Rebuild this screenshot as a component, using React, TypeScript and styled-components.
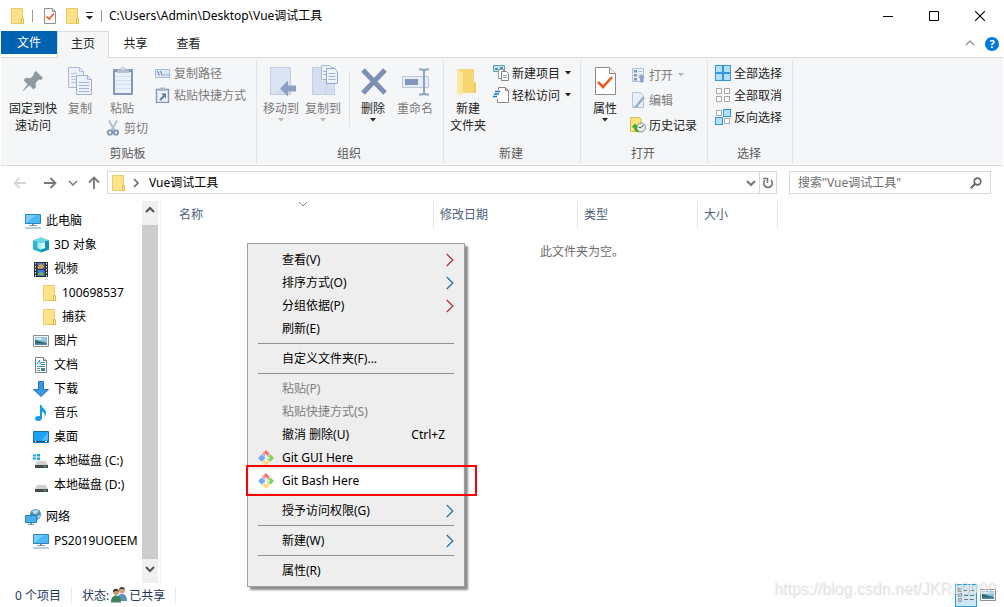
import React from "react";
import styled, { createGlobalStyle, css } from "styled-components";

const GlobalStyle = createGlobalStyle`
  * { box-sizing: border-box; }
  body { margin: 0; background: #fff; }
  body, button, input, table {
    font-family: "Noto Sans", "Noto Sans CJK SC", sans-serif;
    font-size: 12px;
    line-height: 17px;
    color: #000;
  }
  button { background: none; border: 0; padding: 0; margin: 0; }
  svg { display: block; flex: none; }
`;

/* ---------- icons ---------- */

const Folder = () => (
  <svg width="16" height="16" viewBox="0 0 16 16">
    <path d="M2.500.5h11v9.500l1 1v4.500h-12z" fill="#ffe289" stroke="#eccb66" />
    <path d="M12.500 15.500v-5l2 .5v4.500z" fill="#ffe9a4" stroke="#e0b94a" />
  </svg>
);

const CheckPage = ({ size = 16 }: { size?: number }) =>
  size === 32 ? (
    <svg width="32" height="32" viewBox="0 0 32 32">
      <path d="M6.500 2.500h14l6 6v21h-20v-27z" fill="#fff" stroke="#8b8b8b" />
      <path d="M20.500 2.500v6h6" fill="#eee" stroke="#8b8b8b" />
      <path d="M9 17l5 5 9-10" fill="none" stroke="#f0581f" strokeWidth="2.600" />
    </svg>
  ) : (
    <svg width="16" height="16" viewBox="0 0 16 16">
      <path d="M2.500.5h8l3 3v12h-11z" fill="#fafafa" stroke="#909090" />
      <path d="M10.500.5v3h3" fill="#ddd" stroke="#909090" />
      <path d="M4.500 8.500l2.500 2.500 5-5.500" fill="none" stroke="#f0581f" strokeWidth="1.600" />
    </svg>
  );

const CustomizeArrow = () => (
  <svg width="8" height="8" viewBox="0 0 8 8">
    <path d="M0 0h7v1H0zM0 4h7L3.500 7.500z" fill="#222" />
  </svg>
);

const DropArrow = ({ color = "#222" }: { color?: string }) => (
  <svg width="6" height="4" viewBox="0 0 6 4">
    <path d="M0 0h6L3 3.500z" fill={color} />
  </svg>
);

type ChevronProps = { dir: "up" | "down" | "right"; color?: string; width?: number; size?: number };
const chevronPaths = { up: "M2 7l4-4 4 4", down: "M2 4l4 4 4-4", right: "M4 2l4 4-4 4" };
const Chevron = ({ dir, color = "#555", width = 1.5, size = 12 }: ChevronProps) => (
  <svg width={size} height={size} viewBox="0 0 12 12">
    <path d={chevronPaths[dir]} fill="none" stroke={color} strokeWidth={width} />
  </svg>
);

const SubmenuArrow = ({ color }: { color: string }) => (
  <svg width="8" height="14" viewBox="0 0 8 14">
    <path d="M.8 1l6 6-6 6" fill="none" stroke={color} strokeWidth="1.200" />
  </svg>
);

const Arrow = ({ dir, color }: { dir: "left" | "right" | "up"; color: string }) => {
  const turn = { right: 0, left: 180, up: 270 }[dir];
  return (
    <svg width="14" height="14" viewBox="0 0 14 14">
      <g transform={`rotate(${turn} 7 7)`} fill="none" stroke={color} strokeWidth="1.800">
        <path d="M1 7h11M7.500 2l5 5-5 5" />
      </g>
    </svg>
  );
};

const Refresh = () => (
  <svg width="12" height="12" viewBox="0 0 12 12">
    <path d="M3 3A4.300 4.300 0 1 0 9 3" fill="none" stroke="#777" strokeWidth="1.700" />
    <path d="M1 1.500h4.500V6" fill="none" stroke="#777" strokeWidth="1.600" />
  </svg>
);

const Magnifier = () => (
  <svg width="12" height="12" viewBox="0 0 12 12">
    <circle cx="7.500" cy="4.500" r="3.300" fill="none" stroke="#666" strokeWidth="1.700" />
    <path d="M5 7L.8 11.200" stroke="#666" strokeWidth="2" />
  </svg>
);

const Pin = () => (
  <svg width="32" height="32" viewBox="0 0 32 32">
    <path
      d="M19 6l7 7-2 2-2-.5-3.500 3.500.5 4-2.500 2.500-4.200-4.200L6.500 26 6 25.500l4.500-6.300-4-4L9 12.700l4.500.6L17 9.800 16.800 8z"
      fill="#8e9aa0"
    />
  </svg>
);

const CopyPages = () => (
  <svg width="32" height="32" viewBox="0 0 32 32">
    <path d="M4.500 2.500h11l4 4v16h-15z" fill="#edf2fa" stroke="#a9bad6" />
    <path d="M15.500 2.500v4h4M7 8.500h6M7 11.500h6M7 14.500h6M7 17.500h6" fill="none" stroke="#b4c6e2" />
    <path d="M12.500 10.500h11l4 4v15h-15z" fill="#edf2fa" stroke="#a0b2d0" />
    <path d="M23.500 10.500v4h4M15 17.500h10M15 20.500h10M15 23.500h10M15 26.500h10" fill="none" stroke="#a0b5d8" />
  </svg>
);

const Clipboard = () => (
  <svg width="32" height="32" viewBox="0 0 32 32">
    <rect x="7" y="4" width="20" height="26" rx="1" fill="#8297bb" />
    <rect x="9" y="7" width="16" height="21" fill="#e8f0fa" />
    <path d="M9 11.500h16M9 15.500h16M9 19.500h16M9 23.500h16" stroke="#d6e2f2" />
    <path d="M11 8V4.500h3.500a2.500 2.500 0 0 1 5 0H23V8z" fill="#b4c0d2" />
    <circle cx="17" cy="4" r="1" fill="#eef3fa" />
  </svg>
);

const Scissors = () => (
  <svg width="16" height="16" viewBox="0 0 16 16">
    <path d="M4 .5l5.500 10M12 .5l-5.500 10" stroke="#b0bfd5" strokeWidth="2" />
    <circle cx="5" cy="12.500" r="2.200" fill="none" stroke="#7d93b8" strokeWidth="1.800" />
    <circle cx="11" cy="12.500" r="2.200" fill="none" stroke="#7d93b8" strokeWidth="1.800" />
  </svg>
);

const PathIcon = () => (
  <svg width="16" height="16" viewBox="0 0 16 16">
    <path d="M.5 4.500h14v8H.5z" fill="#dde8f5" stroke="#a9bdd9" />
    <path d="M2.500 6l1.800 4.500M5.500 6l1.800 4.500M8.500 10h1M10.500 10h1M12.500 10h1" stroke="#60799f" />
  </svg>
);

const ShortcutClip = () => (
  <svg width="16" height="16" viewBox="0 0 16 16">
    <path d="M1.500 2.500h12v13h-12z" fill="#edf3fb" stroke="#8297bb" strokeWidth="1.400" />
    <path d="M4 4V1.500h1.500V.5h4v1H11V4z" fill="#a9b8d0" />
    <path d="M5 13l4-4" stroke="#60799f" strokeWidth="2" />
    <path d="M6 6.500h5v5z" fill="#60799f" />
  </svg>
);

const MoveTo = () => (
  <svg width="32" height="32" viewBox="0 0 32 32">
    <path d="M5.500 2.500h20v27h-20z" fill="#cfdaec" stroke="#c2d0e6" />
    <path d="M6 3h19v15L10 29H6z" fill="#dbe4f2" />
    <path d="M15 23.500l8-8v5h8v6h-8v5z" fill="#8ba0c3" />
  </svg>
);

const CopyTo = () => (
  <svg width="32" height="32" viewBox="0 0 32 32">
    <path d="M5.500 2.500h22v27h-22z" fill="#d5dfef" stroke="#c2d0e6" />
    <path d="M14.500.5h8l3 3v11h-11z" fill="#eef3fa" stroke="#a5b7d4" />
    <path d="M19.500 3.500h8l3 3v12h-11z" fill="#eef3fa" stroke="#94a8ca" />
    <path d="M21.500 8.500h7M21.500 11.500h7M21.500 14.500h7M16 6.500h3M16 9.500h3" stroke="#9cb2d6" />
    <path d="M19 19v11" stroke="#c2d0e6" />
  </svg>
);

const DeleteCross = () => (
  <svg width="32" height="32" viewBox="0 0 32 32">
    <path d="M6 5l22 23M28 5L6 28" stroke="#7d90b3" strokeWidth="5" />
  </svg>
);

const Rename = () => (
  <svg width="32" height="32" viewBox="0 0 32 32">
    <path d="M3.500 11.500h26v11h-26z" fill="#e6edf8" stroke="#b9c9e0" />
    <path d="M6 14h13v6H6z" fill="#8297bb" />
    <path d="M20 4.500h3.500L25 6l1.500-1.500H30M25 6v22M20 29.500h3.500L25 28l1.500 1.500H30" fill="none" stroke="#8ba0c3" strokeWidth="2" />
  </svg>
);

const NewFolder = () => (
  <svg width="32" height="32" viewBox="0 0 32 32">
    <path d="M5 4h17v14l2 1v9H9z" fill="#f7d673" />
    <path d="M5 4l6 4v19l-2 4-4-3z" fill="#ffe79b" />
    <path d="M22 17l2 1v10h-3z" fill="#f2c95a" />
  </svg>
);

const NewItem = () => (
  <svg width="16" height="16" viewBox="0 0 16 16">
    <path d="M.5.5h11v6H.5z" fill="#c5e4ef" stroke="#5b9fb3" />
    <path d="M2 3h3v2H2zM7 2h3v3H7z" fill="#4d9bb2" />
    <path d="M5.500 4.500h5v9h-5z" fill="#fff" stroke="#999" />
    <path d="M8.500 6.500h5l2 2v7h-7z" fill="#fff" stroke="#888" />
    <path d="M10 10.500h4M10 12.500h4" stroke="#7ba7c4" />
  </svg>
);

const EasyAccess = () => (
  <svg width="16" height="16" viewBox="0 0 16 16">
    <path d="M5.500 3V.5h7l3 3v12h-11V12" fill="#fff" stroke="#888" />
    <path d="M12.500.5v3h3" fill="none" stroke="#888" />
    <path d="M2 4.500h5M1 7h5M0 9.500h4" stroke="#1979ca" strokeWidth="1.500" />
  </svg>
);

const OpenIcon = () => (
  <svg width="16" height="16" viewBox="0 0 16 16">
    <path d="M2.500 1.500h11v13h-11z" fill="#e8eff9" stroke="#aebfd8" />
    <path d="M4 3h3v2.500H4zM4 7h3v2.500H4zM4 11h3v2.500H4z" fill="#8297bb" />
    <path d="M8.500 4.500h3.500M8.500 8h2" stroke="#a9bad6" />
    <path d="M8 11l3.500-4 3.500 4h-2v4.500h-3V11z" fill="#91a4c5" />
  </svg>
);

const EditIcon = () => (
  <svg width="16" height="16" viewBox="0 0 16 16">
    <path d="M2.500.5h8l3 3v12h-11z" fill="#e8eff9" stroke="#b4c4dc" />
    <path d="M6 13l7-9 2 2-7 8-3 1z" fill="#9eafcc" />
    <path d="M4 15l4-1" stroke="#8297bb" />
  </svg>
);

const HistoryIcon = () => (
  <svg width="16" height="16" viewBox="0 0 16 16">
    <path d="M.5.500h9l1.500 2v12H.5z" fill="#fbe37e" stroke="#dcbf4b" />
    <circle cx="11" cy="10.500" r="4.500" fill="#e4e9e6" stroke="#8b9591" />
    <path d="M11 10.500l2.500-2.500M11 10.500h-2" fill="none" stroke="#555" />
    <path d="M1.500 10.500l3.500-4 3.500 4H6.500c.3 2 1.500 3.500 3.500 4.500-4 .8-6-1.500-6-4.500z" fill="#35a936" />
  </svg>
);

const cells = [
  [0, 0],
  [8, 0],
  [0, 8],
  [8, 8],
];
const SelectIcon = ({ on }: { on: number[] }) => (
  <svg width="16" height="16" viewBox="0 0 16 16">
    {cells.map(([x, y], i) =>
      on.includes(i) ? (
        <rect key={i} x={x + 0.5} y={y + 0.5} width="7" height="7" fill="#b3dfff" stroke="#3295dd" />
      ) : (
        <rect key={i} x={x + 1.5} y={y + 1.5} width="5" height="5" fill="#fff" stroke="#aaa" />
      ),
    )}
  </svg>
);

const Monitor = () => (
  <svg width="16" height="16" viewBox="0 0 16 16">
    <path d="M.5 1.500h15v9H.5z" fill="#4cb8f5" stroke="#2b86b9" />
    <path d="M1 10L11 2H1z" fill="#79cdfb" />
    <path d="M7 11h2v1.500H7zM4 12h8v1H4zM0 14.500h16v1H0z" fill="#7d9bb0" />
  </svg>
);

const Cube = () => (
  <svg width="16" height="16" viewBox="0 0 16 16">
    <path d="M0 3.500L8 .5l8 3v9L8 15.500l-8-3z" fill="#2bb5cf" />
    <path d="M0 3.500L8 .5l8 3-8 2z" fill="#6fd9e8" />
    <path d="M12 4.500l4-1v9l-8 3v-3l4-1z" fill="#1391b8" />
    <path d="M4.500 5l3.500 1v6.500l-3.500-1.500z" fill="#a5ecf3" />
    <path d="M8 6l4-1v6l-4 1.500z" fill="#d9f8fa" />
  </svg>
);

const Film = () => (
  <svg width="16" height="16" viewBox="0 0 16 16">
    <path d="M1 1h14v15H1z" fill="#303030" />
    <path d="M4.500 2h7v6h-7z" fill="#5878c8" />
    <path d="M4.500 9h7v6h-7z" fill="#3d7cd6" />
    <path d="M5 5l3-2 3 2-2 2.500H5z" fill="#d8a13c" />
    <path d="M5 13l3-2 3 2v1H5z" fill="#76b547" />
    <path d="M2.500 2v14M13.500 2v14" stroke="#eee" strokeDasharray="1.500 1.500" />
  </svg>
);

const Picture = () => (
  <svg width="16" height="16" viewBox="0 0 16 16">
    <path d="M.5 2.500h15v11H.5z" fill="#fff" stroke="#8d8d8d" />
    <path d="M2 4h12v8H2z" fill="#8ec5ee" />
    <path d="M2 7l4 1 8 2v2H2z" fill="#2f6b63" />
    <path d="M2 10.500h12V12H2z" fill="#4b87b8" />
    <path d="M3 5h5l2 1.500H4z" fill="#edf7fd" />
  </svg>
);

const Document = () => (
  <svg width="16" height="16" viewBox="0 0 16 16">
    <path d="M2.500.5h8l3 3v12h-11z" fill="#fff" stroke="#7d7d7d" />
    <path d="M10.500.5v3h3" fill="#ddd" stroke="#7d7d7d" />
    <path d="M4 7l2.500-4 .8 4M8 5.500h4M4 9.500h8M8 7.500h4" fill="none" stroke="#2e8fd0" />
    <path d="M4 11.500h3M4 13.500h3" stroke="#888" />
    <path d="M8 11h4v3H8z" fill="#45829b" />
  </svg>
);

const Download = () => (
  <svg width="16" height="16" viewBox="0 0 16 16">
    <path d="M5.500.5h5v8h5L8 15.500.5 8.500h5z" fill="#3a97e8" stroke="#2878bd" />
  </svg>
);

const Music = () => (
  <svg width="16" height="16" viewBox="0 0 16 16">
    <path d="M7 0h1.500c.5 3.500 4.500 4 4.500 7.500 0 1.500-.5 3-1.500 4 .5-3-.5-4-2.500-5V13c0 2-1.800 3-3.800 3S2 15 2 13.500s2-2.800 5-2.300z" fill="#139bea" />
  </svg>
);

const Desktop = () => (
  <svg width="16" height="16" viewBox="0 0 16 16">
    <path d="M.5 2.500h15v11H.5z" fill="#1ba1f8" stroke="#1670ae" />
    <path d="M15 3v8L8 12z" fill="#4db8fb" />
    <path d="M1 12h14v1H1z" fill="#0d4f86" />
    <path d="M2 12.500h1M12 12.500h2" stroke="#fff" />
  </svg>
);

const Drive = ({ system }: { system?: boolean }) => (
  <svg width="16" height="16" viewBox="0 0 16 16">
    <path d="M4 8h9l2 4H2z" fill="#cfd2d4" />
    <path d="M2 12h13v3H2z" fill="#4a4a4a" />
    <path d="M11 13h2v1h-2z" fill="#46e04d" />
    {system && <path d="M0 1.500h3v2H0zM4 1h3v2.500H4zM0 4.500h3v2H0zM4 4.500h3V7H4z" fill="#10a5ea" />}
  </svg>
);

const Network = () => (
  <svg width="16" height="16" viewBox="0 0 16 16">
    <circle cx="10.500" cy="5.500" r="5.500" fill="#5391b5" />
    <path d="M7 2c2-1.500 5-1 6.500 0L12 4.500 9 5zM12 7l3.500-1-2 4z" fill="#b8dcec" />
    <path d="M.5 6.500h11v7H.5z" fill="#45b0f2" stroke="#2b7fb4" />
    <path d="M5 14h2v1H5zM3 15h6v1H3z" fill="#7d9bb0" />
  </svg>
);

const People = () => (
  <svg width="16" height="16" viewBox="0 0 16 16">
    <circle cx="11" cy="3.500" r="3" fill="#d2a27c" />
    <path d="M8 3c0-4 6-4 6 0l-1-1H9z" fill="#4b3526" />
    <path d="M6 14c0-5 2-7 5-7s5 2 5 7z" fill="#5f8fb5" />
    <circle cx="5" cy="5" r="3" fill="#c99a78" />
    <path d="M2 5c0-4.500 6-4.500 6 0L6.500 3.500z" fill="#3d2b20" />
    <path d="M0 15.500C0 10.500 2 8.500 5 8.500s5 2 5 7z" fill="#3f8359" />
  </svg>
);

const GitLogo = () => (
  <svg width="16" height="16" viewBox="0 0 16 16">
    <g transform="rotate(45 8 8)">
      <rect x="2.300" y="2.300" width="5.400" height="5.400" rx=".8" fill="#f07878" />
      <rect x="8.300" y="2.300" width="5.400" height="5.400" rx=".8" fill="#84cf60" />
      <rect x="2.300" y="8.300" width="5.400" height="5.400" rx=".8" fill="#76a9fa" />
      <rect x="8.300" y="8.300" width="5.400" height="5.400" rx=".8" fill="#fbe07c" />
    </g>
    <path d="M6 3.500L8 5.500v5M8 6l2.500 2.200" fill="none" stroke="#fff" strokeWidth=".9" />
    <circle cx="8" cy="5.500" r=".9" fill="#fff" />
    <circle cx="8" cy="10.500" r=".9" fill="#fff" />
    <circle cx="10.800" cy="8.200" r=".9" fill="#fff" />
  </svg>
);

const DetailsView = () => (
  <svg width="16" height="16" viewBox="0 0 16 16">
    <path d="M.5 1.500h3v3h-3zM.5 6.500h3v3h-3zM.5 11.500h3v3h-3z" fill="#fff" stroke="#999" />
    <path d="M6 3.500h4M11.500 3.500H16M6 8.500h4M11.500 8.500H16M6 12.500h4M11.500 12.500H16" stroke="#777" />
    <path d="M1.500 2.500h1v1h-1z" fill="#444" />
    <path d="M1.500 7.500h1v1h-1z" fill="#2c77c9" />
    <path d="M1.500 12.500h1v1h-1z" fill="#d02a2a" />
  </svg>
);

/* ---------- window frame ---------- */

const Window = styled.div`
  position: relative;
  display: flex;
  flex-direction: column;
  min-height: 100vh;
  padding: 0 1px;
  background: #fff;
`;

const TitleBar = styled.header`
  display: flex;
  align-items: center;
  height: 31px;
  padding-left: 8px;
`;

const QuickButton = styled.button<{ $narrow?: boolean }>`
  display: flex;
  justify-content: center;
  align-items: center;
  width: ${(p) => (p.$narrow ? 8 : 16)}px;
  height: 22px;
`;

const TitleDivider = styled.span<{ $gap: number }>`
  width: 1px;
  height: 12px;
  margin: 0 ${(p) => p.$gap}px 0 7px;
  background: #999;
`;

const QuickGroup = styled.div`
  display: flex;
  gap: 6px;
`;

const Title = styled.h1`
  flex: 1;
  margin: 0;
  font-size: 12px;
  font-weight: 400;
`;

const WindowButton = styled.button`
  display: flex;
  align-items: center;
  justify-content: center;
  width: 46px;
  height: 31px;
`;

const TabBar = styled.nav`
  display: flex;
  height: 26px;
  padding-right: 4px;
`;

const Tab = styled.button<{ $kind?: "file" | "active" }>`
  position: relative;
  width: 53px;
  height: 24px;
  color: #222;
  ${(p) =>
    p.$kind === "file" &&
    css`
      width: 56px;
      height: 23px;
      background: #0063b1;
      color: #fff;
    `}
  ${(p) =>
    p.$kind === "active" &&
    css`
      width: 52px;
      height: 27px;
      padding-bottom: 3px;
      background: #f5f6f7;
      border: 1px solid #dadbdc;
      border-bottom: 0;
      z-index: 1;
    `}
`;

const TabTools = styled.div`
  display: flex;
  align-items: center;
  gap: 9px;
  margin-left: auto;
`;

const HelpButton = styled.button`
  width: 14px;
  height: 14px;
  border-radius: 50%;
  background: #0078d7;
  color: #fff;
  font-weight: 700;
  font-size: 11px;
  line-height: 14px;
`;

/* ---------- ribbon ---------- */

const Ribbon = styled.section`
  display: flex;
  height: 109px;
  padding: 2px 0;
  background: #f5f6f7;
  border-top: 1px solid #dadbdc;
  border-bottom: 1px solid #dadbdc;
`;

const Group = styled.div<{ $width: number }>`
  display: flex;
  flex-direction: column;
  width: ${(p) => p.$width}px;
  border-right: 1px solid #e2e3e4;
`;

const GroupBody = styled.div<{ $pad?: number }>`
  display: flex;
  flex: 1;
  align-items: flex-start;
  padding-left: ${(p) => p.$pad ?? 0}px;
`;

const GroupLabel = styled.div`
  height: 18px;
  padding-right: 2px;
  text-align: center;
  color: #5a5a5a;
`;

const BigButton = styled.button<{ $width: number }>`
  display: flex;
  flex-direction: column;
  align-items: center;
  width: ${(p) => p.$width}px;
  padding-top: 5px;
  white-space: pre-line;
  color: #222;
  &:disabled { color: #7b7b7b; }
  > span { margin-top: 3px; }
  > svg + span + svg { margin-top: 1px; }
`;

const SmallButton = styled.button`
  display: flex;
  align-items: center;
  gap: 3px;
  height: 22px;
  white-space: nowrap;
  color: #222;
  &:disabled { color: #7b7b7b; }
  > span + svg { margin-left: 2px; }
`;

const Column = styled.div<{ $left?: number; $loose?: boolean }>`
  display: flex;
  flex-direction: column;
  margin-left: ${(p) => p.$left ?? 0}px;
  padding-top: ${(p) => (p.$loose ? 4 : 2)}px;
  gap: ${(p) => (p.$loose ? 3 : 0)}px;
`;

const PasteColumn = styled.div`
  display: flex;
  flex-direction: column;
  width: 48px;
  > ${SmallButton} { padding-left: 6px; }
`;

const InnerDivider = styled.span`
  width: 1px;
  height: 55px;
  margin: 12px 2px 0 5px;
  background: #e2e3e4;
`;

/* ---------- address row ---------- */

const AddressRow = styled.div`
  display: flex;
  align-items: center;
  height: 33px;
  padding: 0 12px;
`;

const NavButtons = styled.div`
  display: flex;
  align-items: center;
  width: 94px;
`;

const NavButton = styled.button<{ $gap?: number }>`
  margin-right: ${(p) => p.$gap ?? 0}px;
`;

const AddressBox = styled.div`
  display: flex;
  flex: 1;
  align-items: center;
  height: 23px;
  padding-left: 2px;
  border: 1px solid #d9d9d9;
`;

const Crumb = styled.button`
  margin-left: 7px;
`;

const CrumbArrow = styled.button`
  margin-left: 4px;
`;

const AddressTools = styled.div`
  display: flex;
  align-items: center;
  height: 100%;
  margin-left: auto;
`;

const AddressTool = styled.button<{ $line?: boolean }>`
  display: flex;
  align-items: center;
  justify-content: center;
  width: ${(p) => (p.$line ? 17 : 16)}px;
  height: 100%;
  border-left: ${(p) => (p.$line ? "1px solid #d9d9d9" : "0")};
`;

const SearchBox = styled.label`
  display: flex;
  align-items: center;
  width: 202px;
  height: 23px;
  margin-left: 12px;
  padding: 0 8px;
  border: 1px solid #d9d9d9;
`;

const SearchInput = styled.input`
  flex: 1;
  min-width: 0;
  padding: 0;
  border: 0;
  outline: 0;
  background: transparent;
  &::placeholder { color: #6d6d6d; opacity: 1; }
`;

/* ---------- navigation tree ---------- */

const Main = styled.main`
  display: flex;
  flex: 1;
  padding-top: 2px;
`;

const Sidebar = styled.aside`
  display: flex;
  width: 160px;
  border-right: 1px solid #f0f0f0;
`;

const Tree = styled.ul`
  flex: 1;
  min-width: 0;
  margin: 0;
  padding: 8px 0 0;
  overflow: hidden;
  list-style: none;
`;

const TreeRow = styled.li<{ $level: number; $spaced?: boolean }>`
  display: flex;
  align-items: center;
  gap: 5px;
  height: 24px;
  margin-top: ${(p) => (p.$spaced ? 8 : 0)}px;
  padding-left: ${(p) => 24 + p.$level * 8}px;
  white-space: nowrap;
  > span { padding-bottom: 1px; }
`;

const ScrollBar = styled.div`
  display: flex;
  flex-direction: column;
  width: 16px;
  margin-right: 2px;
  background: #f0f0f0;
`;

const ScrollButton = styled.button`
  display: flex;
  justify-content: center;
  height: 24px;
  padding-top: 4px;
`;

const ScrollThumb = styled.div`
  flex: 1;
  background: #cdcdcd;
`;

/* ---------- file pane ---------- */

const FilePane = styled.section`
  position: relative;
  flex: 1;
`;

const FileTable = styled.table`
  width: 617px;
  table-layout: fixed;
  border-collapse: collapse;
`;

const HeaderCell = styled.th<{ $width?: number; $pad?: number }>`
  position: relative;
  width: ${(p) => (p.$width ? `${p.$width}px` : "auto")};
  height: 27px;
  padding: 0 0 0 ${(p) => p.$pad ?? 6}px;
  border-right: 1px solid #e5e5e5;
  text-align: left;
  font-weight: 400;
  color: #4c607a;
`;

const SortMark = styled.span`
  position: absolute;
  top: -3px;
  left: 50%;
`;

const EmptyNote = styled.p`
  margin: 15px 0 0;
  text-align: center;
  color: #6d6d6d;
`;

/* ---------- context menu ---------- */

const Menu = styled.div`
  position: absolute;
  top: 42px;
  left: 86px;
  width: 218px;
  padding: 4px 1px;
  background: #eee;
  border: 1px solid #a0a0a0;
  box-shadow: 3px 3px 2px rgba(0, 0, 0, 0.45);
`;

const MenuItem = styled.button<{ $hot?: boolean }>`
  position: relative;
  display: flex;
  align-items: center;
  width: 100%;
  height: 23px;
  padding: 0 9px;
  text-align: left;
  background: ${(p) => (p.$hot ? "#fff" : "transparent")};
  &:disabled { color: #7f7f7f; }
`;

const MenuIcon = styled.span`
  width: 16px;
  margin-right: 8px;
`;

const MenuText = styled.span`
  flex: 1;
`;

const Shortcut = styled.span`
  margin-right: 9px;
`;

const MenuLine = styled.hr`
  height: 1px;
  margin: 3px 9px;
  border: 0;
  background: #919191;
`;

const Marker = styled.span`
  position: absolute;
  inset: -4px -14px -4px -3px;
  border: 2px solid #f00;
  pointer-events: none;
`;

/* ---------- status bar ---------- */

const StatusBar = styled.footer`
  display: flex;
  align-items: center;
  height: 24px;
  padding: 0 7px 0 14px;
  color: #1e395b;
`;

const StatusText = styled.span`
  display: flex;
  align-items: center;
  gap: 2px;
  margin-right: 10px;
  padding-right: 10px;
  border-right: 1px solid #ececec;
`;

const ViewButtons = styled.div`
  display: flex;
  align-items: center;
  gap: 3px;
  margin-left: auto;
`;

const ViewButton = styled.button<{ $on?: boolean }>`
  display: flex;
  align-items: center;
  justify-content: center;
  width: ${(p) => (p.$on ? 22 : 16)}px;
  height: 23px;
  ${(p) =>
    p.$on &&
    css`
      border: 1px solid #26a0da;
      background: #cbe8f6;
    `}
`;

const Watermark = styled.div`
  position: absolute;
  right: 8px;
  bottom: 8px;
  font: 16px/20px "Liberation Sans", sans-serif;
  color: rgba(240, 240, 240, 0.8);
  text-shadow: 1px 1px 1px rgba(0, 0, 0, 0.14);
  pointer-events: none;
`;

/* ---------- data ---------- */

const tree = [
  { text: "此电脑", level: 0, icon: <Monitor /> },
  { text: "3D 对象", level: 1, icon: <Cube /> },
  { text: "视频", level: 1, icon: <Film /> },
  { text: "100698537", level: 2, icon: <Folder /> },
  { text: "捕获", level: 2, icon: <Folder /> },
  { text: "图片", level: 1, icon: <Picture /> },
  { text: "文档", level: 1, icon: <Document /> },
  { text: "下载", level: 1, icon: <Download /> },
  { text: "音乐", level: 1, icon: <Music /> },
  { text: "桌面", level: 1, icon: <Desktop /> },
  { text: "本地磁盘 (C:)", level: 1, icon: <Drive system /> },
  { text: "本地磁盘 (D:)", level: 1, icon: <Drive /> },
  { text: "网络", level: 0, icon: <Network />, spaced: true },
  { text: "PS2019UOEEM", level: 1, icon: <Monitor /> },
];

type Entry =
  | "line"
  | { text: string; arrow?: string; disabled?: boolean; keys?: string; git?: boolean; hot?: boolean };

const menu: Entry[] = [
  { text: "查看(V)", arrow: "#b03030" },
  { text: "排序方式(O)", arrow: "#1f6fae" },
  { text: "分组依据(P)", arrow: "#b03030" },
  { text: "刷新(E)" },
  "line",
  { text: "自定义文件夹(F)..." },
  "line",
  { text: "粘贴(P)", disabled: true },
  { text: "粘贴快捷方式(S)", disabled: true },
  { text: "撤消 删除(U)", keys: "Ctrl+Z" },
  { text: "Git GUI Here", git: true },
  { text: "Git Bash Here", git: true, hot: true },
  "line",
  { text: "授予访问权限(G)", arrow: "#1f6fae" },
  "line",
  { text: "新建(W)", arrow: "#1f6fae" },
  "line",
  { text: "属性(R)" },
];

export default function App() {
  return (
    <Window>
      <GlobalStyle />
      <TitleBar>
        <QuickButton aria-label="窗口"><Folder /></QuickButton>
        <TitleDivider $gap={9} />
        <QuickGroup>
          <QuickButton aria-label="属性"><CheckPage /></QuickButton>
          <QuickButton aria-label="新建文件夹"><Folder /></QuickButton>
          <QuickButton $narrow aria-label="自定义快速访问工具栏"><CustomizeArrow /></QuickButton>
        </QuickGroup>
        <TitleDivider $gap={7} />
        <Title>C:\Users\Admin\Desktop\Vue调试工具</Title>
        <WindowButton aria-label="最小化">
          <svg width="10" height="10"><path d="M0 5.500h10" stroke="#000" /></svg>
        </WindowButton>
        <WindowButton aria-label="最大化">
          <svg width="10" height="10"><path d="M.5.5h9v9h-9z" fill="none" stroke="#000" /></svg>
        </WindowButton>
        <WindowButton aria-label="关闭">
          <svg width="10" height="10"><path d="M0 0l10 10M10 0L0 10" stroke="#000" strokeWidth="1.100" /></svg>
        </WindowButton>
      </TitleBar>

      <TabBar>
        <Tab $kind="file">文件</Tab>
        <Tab $kind="active">主页</Tab>
        <Tab>共享</Tab>
        <Tab>查看</Tab>
        <TabTools>
          <button aria-label="最小化功能区"><Chevron dir="up" color="#999" /></button>
          <HelpButton aria-label="帮助">?</HelpButton>
        </TabTools>
      </TabBar>

      <Ribbon>
        <Group $width={256}>
          <GroupBody $pad={4}>
            <BigButton $width={56}><Pin /><span>{"固定到快\n速访问"}</span></BigButton>
            <BigButton $width={38} disabled><CopyPages /><span>复制</span></BigButton>
            <PasteColumn>
              <BigButton $width={46} disabled><Clipboard /><span>粘贴</span></BigButton>
              <SmallButton disabled><Scissors /><span>剪切</span></SmallButton>
            </PasteColumn>
            <Column $left={8}>
              <SmallButton disabled><PathIcon /><span>复制路径</span></SmallButton>
              <SmallButton disabled><ShortcutClip /><span>粘贴快捷方式</span></SmallButton>
            </Column>
          </GroupBody>
          <GroupLabel>剪贴板</GroupLabel>
        </Group>
        <Group $width={187}>
          <GroupBody $pad={3}>
            <BigButton $width={42} disabled><MoveTo /><span>移动到</span><DropArrow color="#b5b5b5" /></BigButton>
            <BigButton $width={42} disabled><CopyTo /><span>复制到</span><DropArrow color="#b5b5b5" /></BigButton>
            <InnerDivider />
            <BigButton $width={42}><DeleteCross /><span>删除</span><DropArrow /></BigButton>
            <BigButton $width={42} disabled><Rename /><span>重命名</span></BigButton>
          </GroupBody>
          <GroupLabel>组织</GroupLabel>
        </Group>
        <Group $width={137}>
          <GroupBody>
            <BigButton $width={48}><NewFolder /><span>{"新建\n文件夹"}</span></BigButton>
            <Column $left={1}>
              <SmallButton><NewItem /><span>新建项目</span><DropArrow /></SmallButton>
              <SmallButton><EasyAccess /><span>轻松访问</span><DropArrow /></SmallButton>
            </Column>
          </GroupBody>
          <GroupLabel>新建</GroupLabel>
        </Group>
        <Group $width={127}>
          <GroupBody $pad={4}>
            <BigButton $width={40}><CheckPage size={32} /><span>属性</span><DropArrow /></BigButton>
            <Column $left={5} $loose>
              <SmallButton disabled><OpenIcon /><span>打开</span><DropArrow color="#b5b5b5" /></SmallButton>
              <SmallButton disabled><EditIcon /><span>编辑</span></SmallButton>
              <SmallButton><HistoryIcon /><span>历史记录</span></SmallButton>
            </Column>
          </GroupBody>
          <GroupLabel>打开</GroupLabel>
        </Group>
        <Group $width={85}>
          <GroupBody $pad={7}>
            <Column>
              <SmallButton><SelectIcon on={[0, 1, 2, 3]} /><span>全部选择</span></SmallButton>
              <SmallButton><SelectIcon on={[]} /><span>全部取消</span></SmallButton>
              <SmallButton><SelectIcon on={[1, 2]} /><span>反向选择</span></SmallButton>
            </Column>
          </GroupBody>
          <GroupLabel>选择</GroupLabel>
        </Group>
      </Ribbon>

      <AddressRow>
        <NavButtons>
          <NavButton $gap={16} aria-label="后退"><Arrow dir="left" color="#d5d5d5" /></NavButton>
          <NavButton $gap={10} aria-label="前进"><Arrow dir="right" color="#777" /></NavButton>
          <NavButton $gap={8} aria-label="最近位置"><Chevron dir="down" color="#777" size={12} /></NavButton>
          <NavButton aria-label="上移"><Arrow dir="up" color="#777" /></NavButton>
        </NavButtons>
        <AddressBox>
          <Folder />
          <CrumbArrow aria-label="展开"><Chevron dir="right" color="#666" /></CrumbArrow>
          <Crumb>Vue调试工具</Crumb>
          <AddressTools>
            <AddressTool aria-label="历史"><Chevron dir="down" color="#777" width={2} /></AddressTool>
            <AddressTool $line aria-label="刷新"><Refresh /></AddressTool>
          </AddressTools>
        </AddressBox>
        <SearchBox>
          <SearchInput aria-label="搜索" placeholder={'搜索"Vue调试工具"'} />
          <Magnifier />
        </SearchBox>
      </AddressRow>

      <Main>
        <Sidebar>
          <Tree>
            {tree.map((n) => (
              <TreeRow key={n.text} $level={n.level} $spaced={n.spaced}>
                {n.icon}
                <span>{n.text}</span>
              </TreeRow>
            ))}
          </Tree>
          <ScrollBar>
            <ScrollButton aria-label="向上滚动"><Chevron dir="up" width={2} /></ScrollButton>
            <ScrollThumb />
            <ScrollButton aria-label="向下滚动"><Chevron dir="down" width={2} /></ScrollButton>
          </ScrollBar>
        </Sidebar>
        <FilePane>
          <FileTable>
            <thead>
              <tr>
                <HeaderCell $pad={18}>
                  名称
                  <SortMark><Chevron dir="down" color="#888" width={1} /></SortMark>
                </HeaderCell>
                <HeaderCell $width={144}>修改日期</HeaderCell>
                <HeaderCell $width={120}>类型</HeaderCell>
                <HeaderCell $width={80}>大小</HeaderCell>
              </tr>
            </thead>
          </FileTable>
          <EmptyNote>此文件夹为空。</EmptyNote>
          <Menu role="menu">
            {menu.map((m, i) =>
              m === "line" ? (
                <MenuLine key={i} />
              ) : (
                <MenuItem key={i} role="menuitem" disabled={m.disabled} $hot={m.hot}>
                  <MenuIcon>{m.git && <GitLogo />}</MenuIcon>
                  <MenuText>{m.text}</MenuText>
                  {m.keys && <Shortcut>{m.keys}</Shortcut>}
                  {m.arrow && <SubmenuArrow color={m.arrow} />}
                  {m.hot && <Marker />}
                </MenuItem>
              ),
            )}
          </Menu>
        </FilePane>
      </Main>

      <StatusBar>
        <StatusText>0 个项目</StatusText>
        <StatusText>状态:<People />已共享</StatusText>
        <ViewButtons>
          <ViewButton $on aria-label="详细信息"><DetailsView /></ViewButton>
          <ViewButton aria-label="大图标"><Picture /></ViewButton>
        </ViewButtons>
      </StatusBar>
      <Watermark>https://blog.csdn.net/JKR10000</Watermark>
    </Window>
  );
}
